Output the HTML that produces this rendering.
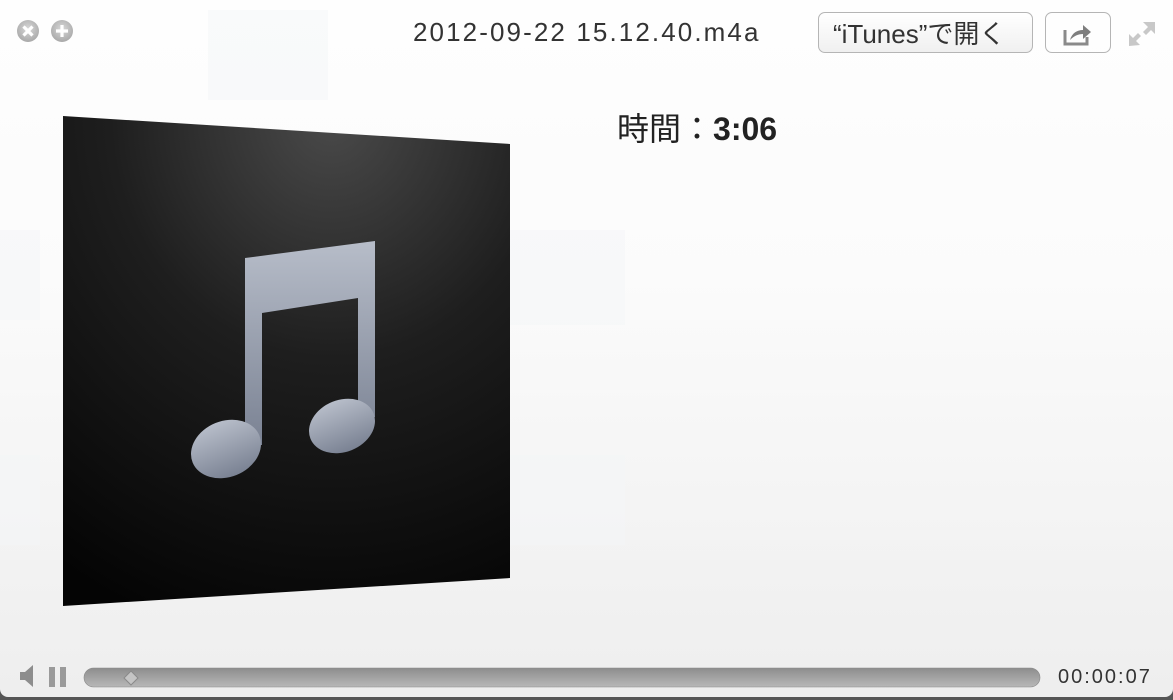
<!DOCTYPE html>
<html><head><meta charset="utf-8"><style>
html,body{margin:0;padding:0;width:1173px;height:700px;overflow:hidden;background:#555;}
.win{position:absolute;left:0;top:0;width:1173px;height:697px;border-radius:0 0 8px 8px;background:linear-gradient(#fefefe 0%,#fbfbfb 40%,#eeeeee 100%);font-family:"Liberation Sans","Noto Sans CJK JP",sans-serif;}
.title{position:absolute;left:413px;top:17px;font-size:26px;color:#333;letter-spacing:2.1px}
.btn{position:absolute;top:12px;height:41px;border:1px solid #b5b5b5;border-radius:7px;background:linear-gradient(#ffffff,#f0f0f0);box-sizing:border-box}
.dur{position:absolute;left:617px;top:104px;font-size:32px;color:#222}
.time{position:absolute;left:1058px;top:666px;font-size:20px;color:#333;letter-spacing:2px}
</style></head><body>
<div class="win">
<svg width="1173" height="697" style="position:absolute;left:0;top:0">
<defs>
<radialGradient id="ag" cx="0.6" cy="0.0" r="1.1"><stop offset="0" stop-color="#4a4a4a"/><stop offset="0.45" stop-color="#1e1e1e"/><stop offset="1" stop-color="#040404"/></radialGradient>
<linearGradient id="ng" x1="0" y1="0" x2="0" y2="1"><stop offset="0" stop-color="#b7bdc9"/><stop offset="1" stop-color="#7a8293"/></linearGradient>
<radialGradient id="cb" cx="0.5" cy="0.4" r="0.6"><stop offset="0" stop-color="#d8d8d8"/><stop offset="1" stop-color="#a9a9a9"/></radialGradient>
<linearGradient id="bar" x1="0" y1="0" x2="0" y2="1"><stop offset="0" stop-color="#8d8d8d"/><stop offset="1" stop-color="#b8b8b8"/></linearGradient>
</defs>
<g fill="#f3f5f8" opacity="0.5">
<rect x="208" y="10" width="120" height="90"/><rect x="500" y="230" width="125" height="95"/><rect x="500" y="455" width="125" height="90"/><rect x="0" y="230" width="40" height="90"/><rect x="0" y="455" width="40" height="90"/>
</g>
<circle cx="28" cy="31" r="11" fill="url(#cb)"/>
<path d="M23.5 26.5l9 9M32.5 26.5l-9 9" stroke="#fff" stroke-width="3.2"/>
<circle cx="62" cy="31" r="11" fill="url(#cb)"/>
<path d="M62 25v12M56 31h12" stroke="#fff" stroke-width="3.2"/>
<polygon points="63,116 510,144 510,578 63,606" fill="url(#ag)"/>
<path d="M245 258 L375 241 L375 417 L358 417 L358 298 L262 313 L262 445 L245 445 Z" fill="url(#ng)"/>
<ellipse cx="226" cy="449" rx="36" ry="28" transform="rotate(-22 226 449)" fill="url(#ng)"/>
<ellipse cx="342" cy="426" rx="34" ry="26" transform="rotate(-22 342 426)" fill="url(#ng)"/>
<path d="M1065 30v14h22v-7" fill="none" stroke="#8a8a8a" stroke-width="3"/>
<path d="M1070 40c2-7 7-10 13-10v-5l8 7-8 7v-5c-5 0-9 2-13 6z" fill="#7e7e7e"/>
<path d="M1143 22h12v12l-4-4-5 5-3-3 5-5z M1129 46v-12l4 4 5-5 3 3-5 5 4 4z" fill="#c8c8c8"/>
<path d="M20 672h5l8-7v22l-8-7h-5z" fill="#8d8d8d"/>
<rect x="49" y="667" width="6" height="20" fill="#9a9a9a"/><rect x="60" y="667" width="6" height="20" fill="#9a9a9a"/>
<rect x="84" y="668" width="956" height="19" rx="9.5" fill="url(#bar)"/>
<rect x="84" y="668" width="956" height="19" rx="9.5" fill="none" stroke="#888" stroke-width="0.6"/>
<path d="M131 671l7 7-7 7-7-7z" fill="#c4c4c4" stroke="#8a8a8a" stroke-width="1"/>
</svg>
<div class="title">2012-09-22 15.12.40.m4a</div>
<div class="btn" style="left:818px;width:215px;"><div style="position:absolute;left:14px;top:1px;font-size:26px;color:#333">“iTunes”で開く</div></div>
<div class="btn" style="left:1045px;width:66px;background:transparent"></div>
<div class="dur">時間：<b>3:06</b></div>
<div class="time">00:00:07</div>
</div>
</body></html>
